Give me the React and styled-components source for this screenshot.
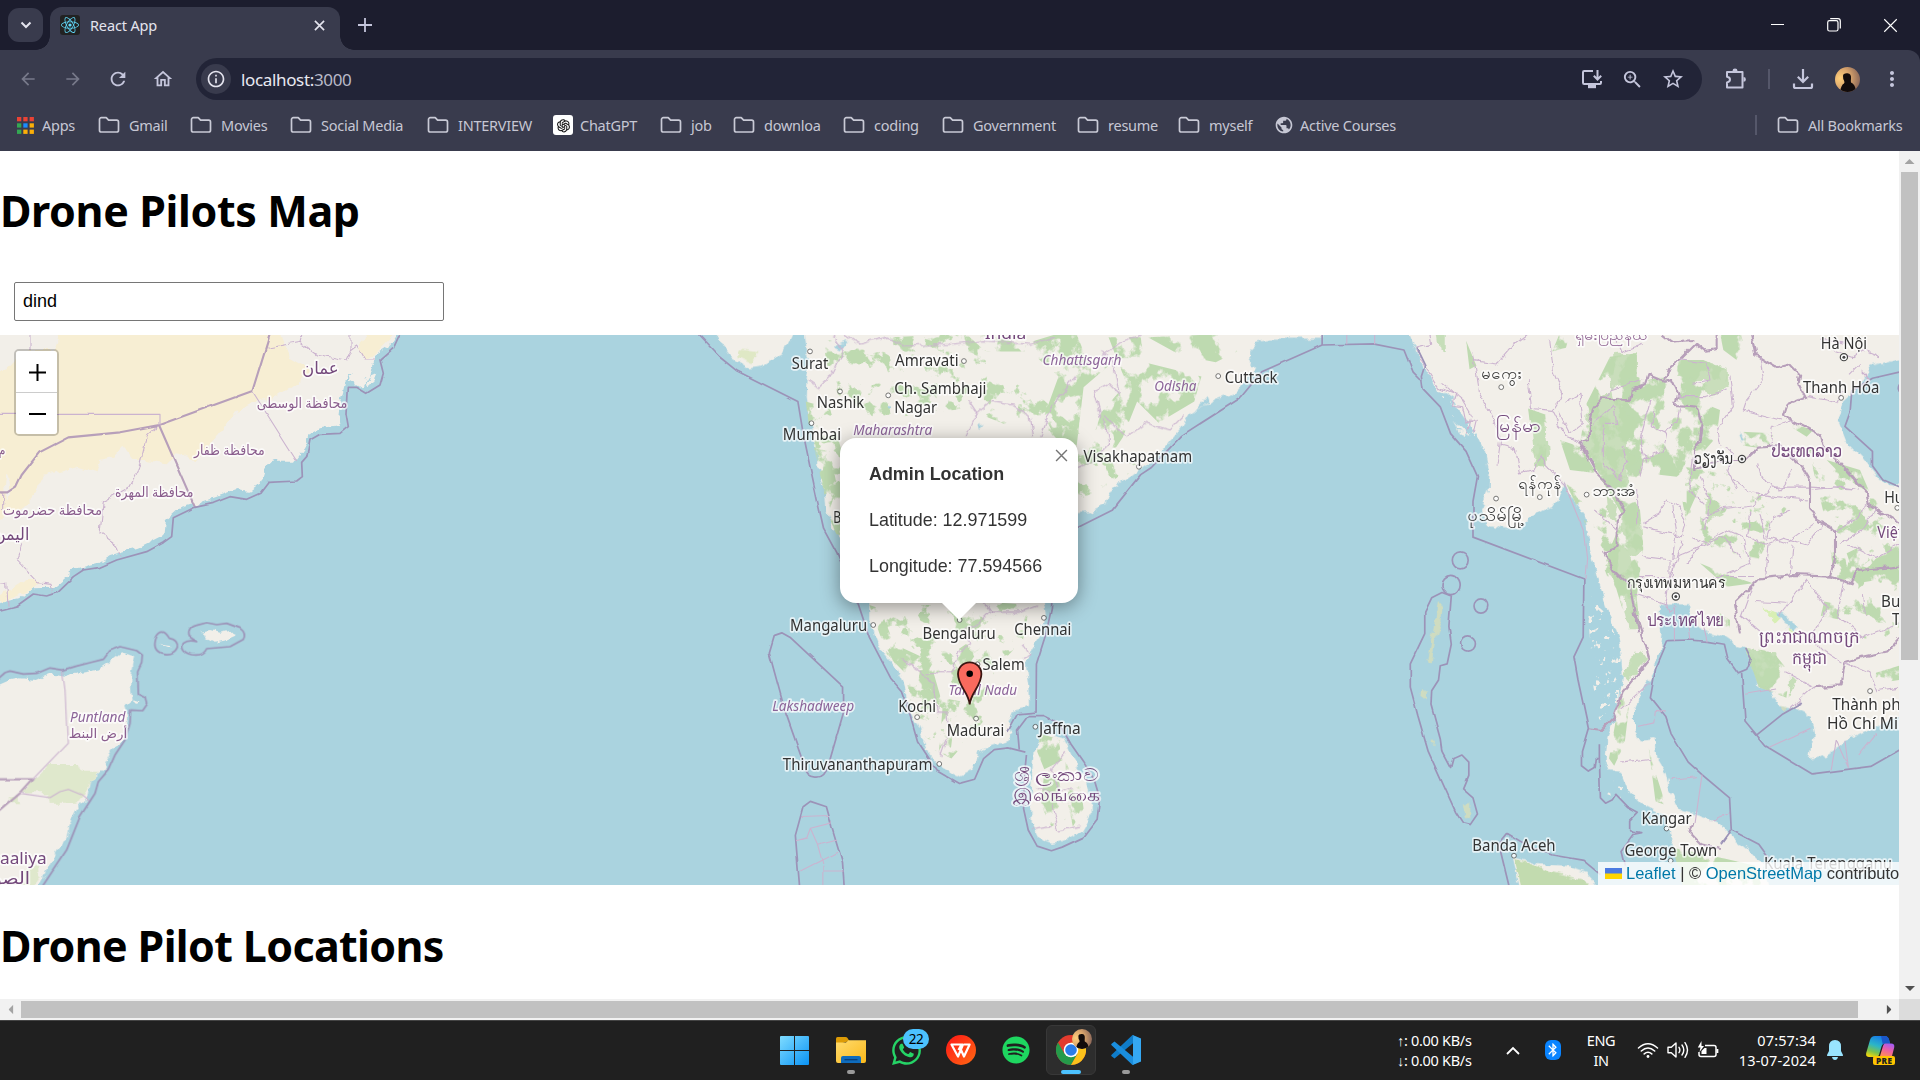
import React from "react";
import styled, { createGlobalStyle, css } from "styled-components";
import {
  MdArrowBack, MdArrowForward, MdRefresh, MdOutlineHome, MdOutlineInfo,
  MdZoomIn, MdStarBorder, MdPublic, MdBluetooth, MdMoreVert,
} from "react-icons/md";
import { FaWhatsapp, FaSpotify, FaReact } from "react-icons/fa6";
import { AiOutlineOpenAI } from "react-icons/ai";

const UI = `"Noto Sans", "Open Sans", sans-serif`;
const ARIAL = `"Liberation Sans", Arial, sans-serif`;

const Global = createGlobalStyle`
  * { box-sizing: border-box; }
  body { margin: 0; overflow: hidden; background: #fff; }
  svg { display: block; flex: none; }
`;

const Screen = styled.div`
  width: 1920px;
  height: 1080px;
  display: flex;
  flex-direction: column;
  overflow: hidden;
  font-family: ${UI};
`;

/* ---------- browser chrome ---------- */

const TabStrip = styled.div`
  height: 50px;
  flex: none;
  display: flex;
  align-items: flex-start;
  padding: 7px 0 0 8px;
  background: #1c1d2e;
`;

const TabSearch = styled.button`
  width: 35px;
  height: 34px;
  margin: 1px 7px 0 0;
  padding: 0;
  border: 0;
  border-radius: 11px;
  display: grid;
  place-items: center;
  background: #393b4d;
`;

const Tab = styled.div`
  position: relative;
  width: 290px;
  height: 43px;
  padding: 0 15px 7px 10px;
  display: flex;
  align-items: center;
  background: #393b4d;
  border-radius: 12px 12px 0 0;
  &::before, &::after {
    content: "";
    position: absolute;
    bottom: 0;
    width: 14px;
    height: 14px;
  }
  &::before { left: -14px; background: radial-gradient(circle at 0 0, transparent 13.5px, #393b4d 14px); }
  &::after { right: -14px; background: radial-gradient(circle at 100% 0, transparent 13.5px, #393b4d 14px); }
`;

const Favicon = styled.span`
  width: 20px;
  height: 20px;
  border-radius: 3px;
  display: grid;
  place-items: center;
  background: #222;
  color: #61dafb;
`;

const TabTitle = styled.span`
  flex: 1;
  margin-left: 10px;
  color: #e4e4ee;
  font-size: 14.5px;
  letter-spacing: -0.15px;
`;

const NewTab = styled.span`
  width: 50px;
  height: 36px;
  display: grid;
  place-items: center;
`;

const WindowButtons = styled.div`
  margin-left: auto;
  height: 36px;
  display: flex;
  align-items: center;
`;

const WindowButton = styled.span`
  width: ${(p) => p.$w || 57}px;
  display: grid;
  place-items: center;
`;

const Toolbar = styled.div`
  height: 54px;
  flex: none;
  display: flex;
  align-items: center;
  padding: 4px 0 0 5px;
  background: #393b4d;
  border-top-right-radius: 12px;
`;

const ToolbarBack = styled.div`
  flex: none;
  background: #1c1d2e;
`;

const ToolButton = styled.span`
  width: ${(p) => p.$w || 45}px;
  height: 42px;
  flex: none;
  display: grid;
  place-items: center;
  color: ${(p) => (p.$dim ? "#77798a" : "#c5c6dc")};
`;

const Omnibox = styled.div`
  width: 1506px;
  height: 42px;
  flex: none;
  margin-left: 11px;
  padding: 0 9px 0 5px;
  display: flex;
  align-items: center;
  border-radius: 21px;
  background: #222437;
  color: #d0d0dc;
`;

const SiteInfo = styled.span`
  width: 30px;
  height: 30px;
  border-radius: 50%;
  display: grid;
  place-items: center;
  background: #393b4d;
  color: #e4e4ee;
`;

const Url = styled.span`
  flex: 1;
  margin-left: 10px;
  font-size: 17px;
  letter-spacing: -0.35px;
  color: #b9bac8;
  b { font-weight: 400; color: #e9e9f2; }
`;

const Divider = styled.span`
  width: ${(p) => p.$w}px;
  height: 20px;
  flex: none;
  margin: ${(p) => p.$m};
  background: #55576a;
`;

const Avatar = styled.span`
  width: 25px;
  height: 25px;
  flex: none;
  margin: 0 10px 0 8px;
  border-radius: 50%;
  overflow: hidden;
`;

const Bookmarks = styled.div`
  height: 47px;
  flex: none;
  display: flex;
  align-items: center;
  padding: 0 0 5px 17px;
  background: #393b4d;
`;

const Bookmark = styled.span`
  width: ${(p) => p.$w}px;
  display: flex;
  align-items: center;
  gap: ${(p) => p.$gap ?? 9}px;
  color: #c6c7d4;
  font-size: 14.5px;
  letter-spacing: -0.25px;
  white-space: nowrap;
`;

const GptBadge = styled.span`
  width: 20px;
  height: 20px;
  flex: none;
  border-radius: 3px;
  display: grid;
  place-items: center;
  background: #fff;
  color: #111;
`;

const Spacer = styled.span`flex: 1;`;

/* ---------- page ---------- */

const Viewport = styled.div`
  height: 869px;
  flex: none;
  display: grid;
  grid-template-columns: 1899px 21px;
  grid-template-rows: 848px 21px;
`;

const Page = styled.main`
  overflow: hidden;
  background: #fff;
`;

const Heading = styled.h1`
  margin: 0;
  height: ${(p) => p.$h}px;
  padding-top: ${(p) => p.$top}px;
  color: #000;
  font-family: ${UI};
  font-size: 43px;
  line-height: 60px;
  font-weight: 700;
  letter-spacing: ${(p) => p.$ls}px;
  white-space: nowrap;
`;

const SearchInput = styled.input`
  display: block;
  width: 430px;
  height: 39px;
  margin: 0 0 14px 14px;
  padding: 0 8px;
  border: 1px solid #767676;
  border-radius: 2px;
  outline: 0;
  font: 18px ${ARIAL};
  color: #000;
`;

const MapBox = styled.section`
  position: relative;
  height: 550px;
  overflow: hidden;
  background: #aad3df;
`;

const ZoomControl = styled.div`
  position: absolute;
  top: 14px;
  left: 14px;
  width: 45px;
  border: 2px solid rgba(0, 0, 0, 0.2);
  background-clip: padding-box;
  border-radius: 5px;
  overflow: hidden;
`;

const ZoomButton = styled.div`
  height: ${(p) => p.$h}px;
  padding: 1px 0 0 1px;
  display: grid;
  place-items: center;
  background: #fff;
  border-bottom: ${(p) => (p.$line ? "1px solid #ccc" : "0")};
`;

const Popup = styled.div`
  position: absolute;
  left: 840px;
  top: 103px;
  width: 238px;
  height: 165px;
  padding: 25px 29px;
  border-radius: 16px;
  background: #fff;
  box-shadow: 0 4px 19px rgba(0, 0, 0, 0.4);
  font: 17.9px/22px ${ARIAL};
  color: #333;
  p { margin: 0 0 24px; }
`;

const PopupTip = styled.div`
  position: absolute;
  left: 942px;
  top: 268px;
  width: 34px;
  height: 17px;
  background: #fff;
  clip-path: polygon(0 0, 100% 0, 50% 100%);
`;

const PopupClose = styled.span`
  position: absolute;
  right: 10px;
  top: 11px;
`;

const Attribution = styled.div`
  position: absolute;
  left: 1598px;
  bottom: 0;
  height: 23px;
  padding-left: 7px;
  display: flex;
  align-items: center;
  background: rgba(255, 255, 255, 0.8);
  font: 16.5px ${ARIAL};
  color: #333;
  white-space: pre;
  width: 340px;
  a { color: #0078a8; }
  svg { margin-right: 4px; }
`;

const track = css`
  display: flex;
  align-items: center;
  background: #f1f1f1;
`;
const VScroll = styled.div`
  ${track}
  flex-direction: column;
`;
const HScroll = styled.div`
  ${track}
`;
const ScrollArrow = styled.span`
  width: 21px;
  height: 21px;
  flex: none;
  display: grid;
  place-items: center;
  &::after {
    content: "";
    width: 10px;
    height: 5px;
    background: ${(p) => (p.$off ? "#a3a3a3" : "#505050")};
    clip-path: polygon(50% 0, 100% 100%, 0 100%);
    transform: rotate(${(p) => p.$turn}deg);
  }
`;
const Thumb = styled.span`
  width: ${(p) => p.$w}px;
  height: ${(p) => p.$h}px;
  background: #c1c1c1;
`;
const Corner = styled.div`background: #dcdcdc;`;

/* ---------- taskbar ---------- */

const Taskbar = styled.footer`
  height: 60px;
  flex: none;
  display: flex;
  align-items: stretch;
  padding-bottom: 1px;
  background: #202020;
  border-top: 1px solid #444;
  color: #fff;
`;

const TaskApps = styled.div`
  display: flex;
  align-items: center;
  margin-left: 769px;
  width: 628px;
`;

const TaskApp = styled.div`
  position: relative;
  width: 50px;
  height: 50px;
  margin-right: ${(p) => p.$gap ?? 5}px;
  display: grid;
  place-items: center;
  border-radius: 6px;
  border: 1px solid ${(p) => (p.$active ? "#383838" : "transparent")};
  background: ${(p) => (p.$active ? "#2d2d2d" : "transparent")};
  &::after {
    content: "";
    position: absolute;
    bottom: 0;
    left: calc(50% - ${(p) => (p.$active ? 10 : 4)}px);
    width: ${(p) => (p.$active ? 20 : p.$running ? 8 : 0)}px;
    height: 4px;
    border-radius: 2px;
    background: ${(p) => (p.$active ? "#4cc2ff" : "#9a9a9a")};
  }
`;

const CountBadge = styled.span`
  position: absolute;
  left: 21px;
  top: 3px;
  width: 26px;
  height: 20px;
  border-radius: 10px;
  background: #4cc2ff;
  color: #000;
  font-size: 13.5px;
  line-height: 20px;
  text-align: center;
  letter-spacing: -0.5px;
`;

const ProfileBadge = styled.span`
  position: absolute;
  right: 3px;
  top: 3px;
  width: 20px;
  height: 20px;
  border-radius: 50%;
  overflow: hidden;
`;

const TrayText = styled.div`
  width: ${(p) => p.$w}px;
  align-self: center;
  display: flex;
  flex-direction: column;
  font-size: 14.5px;
  line-height: 20px;
  letter-spacing: ${(p) => p.$ls ?? -0.35}px;
  text-align: ${(p) => p.$align || "left"};
  white-space: nowrap;
`;

const TrayIcon = styled.span`
  width: ${(p) => p.$w}px;
  display: grid;
  place-items: center;
`;

const BluetoothTile = styled.span`
  width: 16px;
  height: 20px;
  border-radius: 6px;
  display: grid;
  place-items: center;
  background: #0a84ff;
`;

/* ---------- small drawings ---------- */

const Folder = () => (
  <svg width="22" height="18" viewBox="0 0 22 18" fill="none" stroke="#c9cad6" strokeWidth="1.7" strokeLinejoin="round">
    <path d="M1.5 3.5a1.8 1.8 0 0 1 1.8-1.8h4.9l2.4 2.5h8.1a1.8 1.8 0 0 1 1.8 1.8v8.2a1.8 1.8 0 0 1-1.8 1.8H3.300a1.800 1.800 0 0 1-1.800-1.800z" />
  </svg>
);

const AppsGrid = () => (
  <svg width="17" height="17" viewBox="0 0 17 17">
    {["#ea4335", "#ea4335", "#ea4335", "#34a853", "#1a8cff", "#fbaf08", "#34a853", "#fbaf08", "#fbaf08"].map((c, i) => (
      <rect key={i} x={(i % 3) * 6.3} y={Math.floor(i / 3) * 6.3} width="4.3" height="4.3" fill={c} />
    ))}
  </svg>
);

const Portrait = ({ size }) => (
  <svg width={size} height={size} viewBox="0 0 25 25">
    <defs>
      <radialGradient id="dusk" cx="0.2" cy="0.45" r="0.9">
        <stop offset="0" stopColor="#ffcf7a" />
        <stop offset="0.45" stopColor="#d9a46c" />
        <stop offset="1" stopColor="#7a5a55" />
      </radialGradient>
    </defs>
    <rect width="25" height="25" fill="url(#dusk)" />
    <path d="M8 9q0-3 4.500-2.800Q16.500 6.500 16 11.500q-.3 3 0 4 4.500 1.500 5 9.500H5q1-7 4-8.500 1-1 0-3-1-1-1-4.500z" fill="#120b0b" />
  </svg>
);

const Install = () => (
  <svg width="22" height="20" viewBox="0 0 22 20" fill="none" stroke="currentColor" strokeWidth="2">
    <path d="M12 2H3.200Q2 2 2 3.200V13.800Q2 15 3.200 15H18.800Q20 15 20 13.800V12M16.500 1v9M12.800 6.800l3.700 3.700 3.700-3.700" />
    <path d="M7 17.500h8" strokeWidth="3.400" />
  </svg>
);

const Puzzle = () => (
  <svg width="22" height="22" viewBox="0 0 22 22" fill="none" stroke="currentColor" strokeWidth="2" strokeLinejoin="round">
    <path d="M2 4h15.500v15.500H2v-5q3-.6 3-2.900T2 8.800z" />
    <path d="M7.500 3q0-2.400 2.500-2.400T12.500 3zM18.500 9q2.400 0 2.400 2.400t-2.400 2.400z" fill="currentColor" stroke="none" />
  </svg>
);

const Download = () => (
  <svg width="22" height="22" viewBox="0 0 22 22" fill="none" stroke="currentColor" strokeWidth="2.200">
    <path d="M11 1v12.500M5.800 8.800l5.200 5.200 5.200-5.200M2 15.500v3q0 1.500 1.500 1.500h15q1.500 0 1.500-1.500v-3" />
  </svg>
);

const Cross = ({ size, color, w = 1.5 }) => (
  <svg width={size} height={size} viewBox="0 0 12 12" stroke={color} strokeWidth={w}>
    <path d="M1 1l10 10M11 1L1 11" />
  </svg>
);

const WindowsLogo = () => (
  <svg width="29" height="29" viewBox="0 0 29 29">
    <defs>
      <linearGradient id="pane" x1="0" y1="0" x2="29" y2="29" gradientUnits="userSpaceOnUse">
        <stop offset="0" stopColor="#7fdcff" />
        <stop offset="1" stopColor="#0a93f5" />
      </linearGradient>
    </defs>
    <path d="M0 1q0-1 1-1h13v14H0zM15 0h13q1 0 1 1v13H15zM0 15h14v14H1q-1 0-1-1zM15 15h14v13q0 1-1 1H15z" fill="url(#pane)" />
  </svg>
);

const Explorer = () => (
  <svg width="30" height="26" viewBox="0 0 30 26">
    <defs>
      <linearGradient id="manila" x1="0" y1="0" x2="1" y2="1">
        <stop offset="0" stopColor="#ffdb6e" />
        <stop offset="1" stopColor="#fbb91a" />
      </linearGradient>
    </defs>
    <path d="M0 1.500Q0 0 1.500 0h8q1.300 0 2 1l1.800 3L0 8z" fill="#dd9b06" />
    <path d="M0 5.500h10l2.500-2.300H30V24q0 2-2 2H2q-2 0-2-2z" fill="url(#manila)" />
    <path d="M5 26v-5q0-2 2-2h16q2 0 2 2v5z" fill="#0f6cbd" />
    <path d="M8.500 22.700h13" stroke="#0a3f78" strokeWidth="1.300" />
  </svg>
);

const Wps = () => (
  <svg width="30" height="30" viewBox="0 0 30 30">
    <defs>
      <linearGradient id="wps" x1="0" y1="0" x2="1" y2="1">
        <stop offset="0" stopColor="#ff1616" />
        <stop offset="1" stopColor="#ff6a13" />
      </linearGradient>
    </defs>
    <circle cx="15" cy="15" r="15" fill="url(#wps)" />
    <path d="M5.500 9.500H17L12 21.500zM12.500 15l3-5.500M14.800 14.500l3.200 7 5.600-12H18" fill="none" stroke="#fff" strokeWidth="2.200" strokeLinejoin="round" />
  </svg>
);

const Chrome = () => (
  <svg width="30" height="30" viewBox="0 0 30 30">
    <circle cx="15" cy="15" r="15" fill="#e33b2e" />
    <path d="M2 7.500A15 15 0 0 0 15 30l6.500-11.300L15 15 8.500 18.700z" fill="#259b4a" />
    <path d="M15 30A15 15 0 0 0 28 7.500H15l6.500 11.200z" fill="#fcc21b" />
    <circle cx="15" cy="15" r="7.300" fill="#fff" />
    <circle cx="15" cy="15" r="5.800" fill="#2b7de9" />
  </svg>
);

const VsCode = () => (
  <svg width="30" height="30" viewBox="0 0 30 30">
    <path d="M21.500 0L30 4v5.500L22 8.200 3.500 23.500.6 21.300q-.8-.8 0-1.600z" fill="#0f7cc9" />
    <path d="M21.500 30L30 26v-5.500l-8 1.300L3.500 6.500.6 8.700q-.8.800 0 1.600z" fill="#1a8ede" />
    <path d="M21.500 0q1.500 1 .5 3v24q1 2-.5 3L30 26.500V3.500z" fill="#35a8f3" />
  </svg>
);

const Wifi = () => (
  <svg width="22" height="17" viewBox="0 0 22 17" fill="none" stroke="#fff" strokeWidth="1.500" strokeLinecap="round">
    <path d="M1.500 6Q11-2.500 20.500 6M4.300 9q6.700-6 13.400 0M7.200 11.900q3.800-3.400 7.600 0" />
    <circle cx="11" cy="14.500" r="1.400" fill="#fff" stroke="none" />
  </svg>
);

const Speaker = () => (
  <svg width="22" height="18" viewBox="0 0 22 18" fill="none" stroke="#fff" strokeWidth="1.400" strokeLinejoin="round" strokeLinecap="round">
    <path d="M1 6.300h3.300L9 2v14l-4.700-4.300H1zM12 6.300q1.800 2.700 0 5.400M15 4q3.600 5 0 10M18 1.700q5 7.300 0 14.600" />
  </svg>
);

const Battery = () => (
  <svg width="22" height="18" viewBox="0 0 22 18" fill="none" stroke="#fff" strokeWidth="1.500">
    <path d="M8 4.500h9q2 0 2 2v7q0 2-2 2H4q-2 0-2-2V11M20.600 8v4" />
    <path d="M4.500 13V10l3-3h2v6z" fill="#fff" stroke="none" />
    <path d="M4.500 0L.8 6.500h2.700L2.500 11 7 5H4.500z" fill="#fff" stroke="none" />
  </svg>
);

const Bell = () => (
  <svg width="18" height="20" viewBox="0 0 18 20" fill="#99e4ff">
    <path d="M9 0q6 0 6 6.500v4.500l2 4q.3 1-.7 1H1.700q-1 0-.7-1l2-4V6.500Q3 0 9 0zM6 17h6q-.6 3-3 3t-3-3z" />
  </svg>
);

const Copilot = () => (
  <svg width="30" height="29" viewBox="0 0 30 29">
    <defs>
      <linearGradient id="cpl" x1="0.6" y1="0" x2="0.2" y2="1">
        <stop offset="0" stopColor="#1679e8" />
        <stop offset="0.45" stopColor="#2bb5c8" />
        <stop offset="0.75" stopColor="#7dc24b" />
        <stop offset="1" stopColor="#f5d90a" />
      </linearGradient>
      <linearGradient id="cpr" x1="0.7" y1="0" x2="0.3" y2="1">
        <stop offset="0" stopColor="#a35cf5" />
        <stop offset="0.5" stopColor="#ec5fa6" />
        <stop offset="1" stopColor="#ff8a5c" />
      </linearGradient>
    </defs>
    <path d="M9 0h10q3 0 4 3.500l1 4h-5q-2.500 0-3.500 3L13 19q-1 2-3 2H3q-3.500 0-2.800-4L4 4q1.200-4 5-4z" fill="url(#cpl)" />
    <path d="M15 0h4q3 0 4 3.500l1 4h-5q-1.500 0-2.200 1z" fill="#1b57c9" />
    <path d="M19 7.500h6q4 0 3.200 4L26 20H14l3-10q.6-2.500 2-2.500z" fill="url(#cpr)" />
    <rect x="7" y="20" width="22" height="9" rx="2" fill="#ffc400" />
    <text x="18" y="27.500" textAnchor="middle" fontFamily="Open Sans, sans-serif" fontWeight="800" fontSize="8.200" fill="#222" textLength="16">PRE</text>
  </svg>
);

/* ---------- map ---------- */

// Each sheet has its own local units; x, y is its origin on the screen.
const SHEETS = {
  arabia: { x: 0, y: 150, sx: 3, sy: 3 },
  somalia: { x: 0, y: 600, sx: 3, sy: 3 },
  india: { x: 680, y: 330, sx: 2.8, sy: 2.8 },
  indochina: { x: 1380, y: 330, sx: 2.9037, sy: 2.8 },
  mekong: { x: 1560, y: 330, sx: 3, sy: 3 },
};

const Sheet = ({ on, children }) => {
  const s = SHEETS[on];
  return (
    <g transform={`translate(${s.x} ${s.y}) scale(${1 / s.sx} ${1 / s.sy})`}>
      {children}
    </g>
  );
};

const Land = styled.path`fill: #f2efe9;`;
const Desert = styled.path`fill: #f7eed3;`;
const Wood = styled.path`fill: ${(p) => p.$c || "#bedab0"};`;
const Lake = styled.path`fill: #aad3df;`;
const Line = styled.path`
  fill: none;
  stroke: ${(p) => (p.$kind === "state" ? "#cbb3cf" : p.$kind === "nation" ? "#b79fba" : "#9c93b8")};
  stroke-width: ${(p) => (p.$kind === "state" ? 1.1 : p.$kind === "nation" ? 2.1 : 1.7)}px;
  stroke-linejoin: round;
  vector-effect: non-scaling-stroke;
`;

const MapText = styled.text`
  font-family: "Noto Sans", "DejaVu Sans", sans-serif;
  font-size: ${(p) => p.$size}px;
  font-style: ${(p) => (p.$kind === "state" ? "italic" : "normal")};
  fill: ${(p) => (p.$kind === "city" ? "#333" : p.$kind === "state" ? "#8c6499" : p.$kind === "arab" ? "#8a5d8d" : "#74497c")};
  stroke: rgba(255, 255, 255, 0.7);
  stroke-width: 3.5px;
  paint-order: stroke;
  stroke-linejoin: round;
`;

// sheet, text, left, baseline, width (sheet units), size, kind
const LABELS = [
  ["arabia", "عمان", 906, 672, 110, 17, "country"],
  ["arabia", "محافظة الوسطى", 770, 773, 272, 14, "arab"],
  ["arabia", "محافظة ظفار", 582, 916, 212, 14, "arab"],
  ["arabia", "محافظة المهرة", 345, 1041, 235, 14, "arab"],
  ["arabia", "محافظة حضرموت", 8, 1095, 298, 14, "arab"],
  ["arabia", "اليمن", -18, 1170, 106, 17, "country"],
  ["arabia", "م", -4, 916, 20, 14, "arab"],
  ["somalia", "Puntland", 210, 365, 166, 14, "state"],
  ["somalia", "أرض البنط", 206, 413, 176, 13, "arab"],
  ["somalia", "aaliya", 0, 792, 140, 16.5, "country"],
  ["somalia", "الصو", -22, 852, 112, 17, "country"],
  ["india", "India", 853, 24, 117, 17, "country"],
  ["india", "Surat", 313, 108, 102, 16, "city"],
  ["india", "Amravati", 602, 102, 178, 16, "city"],
  ["india", "Chhattisgarh", 1015, 97, 221, 14, "state"],
  ["india", "Odisha", 1328, 170, 118, 14, "state"],
  ["india", "Nashik", 383, 218, 133, 16, "city"],
  ["india", "Ch. Sambhaji", 600, 180, 258, 16, "city"],
  ["india", "Nagar", 600, 233, 120, 16, "city"],
  ["india", "Maharashtra", 485, 294, 221, 14, "state"],
  ["india", "Mumbai", 288, 307, 163, 16, "city"],
  ["india", "Visakhapatnam", 1130, 370, 304, 16, "city"],
  ["india", "Cuttack", 1525, 147, 148, 16, "city"],
  ["india", "B", 429, 540, 22, 16, "city"],
  ["india", "Mangaluru", 308, 843, 216, 16, "city"],
  ["india", "Bengaluru", 679, 865, 205, 16, "city"],
  ["india", "Chennai", 936, 853, 160, 16, "city"],
  ["india", "Salem", 847, 951, 118, 16, "city"],
  ["india", "Tamil Nadu", 752, 1023, 192, 14, "state"],
  ["india", "Lakshadweep", 258, 1067, 230, 14, "state"],
  ["india", "Kochi", 611, 1070, 106, 16, "city"],
  ["india", "Madurai", 747, 1136, 161, 16, "city"],
  ["india", "Jaffna", 1005, 1130, 117, 16, "city"],
  ["india", "Thiruvananthapuram", 288, 1232, 419, 16, "city"],
  ["india", "ශ්‍රී ලංකාව", 936, 1262, 236, 17, "country"],
  ["india", "இலங்கை", 932, 1320, 244, 17, "country"],
  ["indochina", "ရှမ်းပြည်နယ်", 565, 28, 210, 14, "arab"],
  ["indochina", "မကွေး", 293, 136, 118, 15, "city"],
  ["indochina", "မြန်မာ", 337, 285, 130, 18, "country"],
  ["indochina", "ရန်ကုန်", 402, 446, 125, 15, "city"],
  ["indochina", "ဘားအံ", 616, 465, 128, 15, "city"],
  ["indochina", "ပုသိမ်မြို့", 252, 535, 168, 15, "city"],
  ["indochina", "ວຽງຈັນ", 911, 376, 114, 15, "city"],
  ["indochina", "ປະເທດລາວ", 1137, 355, 205, 17, "country"],
  ["indochina", "Hà Nội", 1280, 54, 134, 16, "city"],
  ["indochina", "Thanh Hóa", 1228, 176, 222, 16, "city"],
  ["indochina", "Huế", 1464, 484, 80, 16, "city"],
  ["indochina", "Việt Nam", 1444, 581, 180, 17, "country"],
  ["indochina", "Buôn", 1455, 775, 110, 16, "city"],
  ["indochina", "Thuột", 1487, 826, 120, 16, "city"],
  ["indochina", "กรุงเทพมหานคร", 716, 722, 286, 15, "city"],
  ["indochina", "ประเทศไทย", 774, 828, 226, 17, "country"],
  ["indochina", "ព្រះរាជាណាចក្រ", 1100, 875, 294, 17, "country"],
  ["indochina", "កម្ពុជា", 1196, 934, 103, 17, "country"],
  ["indochina", "Thành phố", 1313, 1064, 226, 16, "city"],
  ["indochina", "Hồ Chí Minh", 1298, 1116, 262, 16, "city"],
  ["indochina", "Kangar", 759, 1383, 146, 16, "city"],
  ["indochina", "Banda Aceh", 268, 1460, 242, 16, "city"],
  ["indochina", "George Town", 710, 1473, 269, 16, "city"],
  ["indochina", "Kuala Terengganu", 1115, 1510, 372, 16, "city"],
];

const TOWNS = [
  ["india", 364, 60], ["india", 795, 87], ["india", 448, 172], ["india", 583, 183], ["india", 368, 261],
  ["india", 1507, 129], ["india", 1285, 383], ["india", 541, 826], ["india", 783, 812], ["india", 1019, 806],
  ["india", 833, 936], ["india", 664, 1084], ["india", 829, 1088], ["india", 995, 1111], ["india", 726, 1215],
  ["indochina", 352, 160], ["indochina", 337, 472], ["indochina", 464, 468], ["indochina", 600, 461],
  ["indochina", 1339, 190], ["indochina", 1502, 498], ["indochina", 1423, 1011], ["indochina", 832, 1396],
  ["indochina", 389, 1472], ["indochina", 844, 1486],
];
const CAPITALS = [["indochina", 1347, 76], ["indochina", 1051, 361], ["indochina", 859, 746]];

const place = (on, x, y) => {
  const s = SHEETS[on];
  return [s.x + x / s.sx, s.y + y / s.sy];
};

const MAP_AREA = { filterUnits: "userSpaceOnUse", x: 0, y: 330, width: 1899, height: 560, colorInterpolationFilters: "sRGB" };

// Rough edges for coasts and borders.
const Jitter = ({ id, freq, scale }) => (
  <filter id={id} {...MAP_AREA}>
    <feTurbulence type="fractalNoise" baseFrequency={freq} numOctaves="3" seed="4" result="n" />
    <feDisplacementMap in="SourceGraphic" in2="n" scale={scale} xChannelSelector="R" yChannelSelector="G" />
  </filter>
);

// Breaks a flat woodland shape into patches.
const Patches = ({ id, freq, seed, gain, cut }) => (
  <filter id={id} {...MAP_AREA}>
    <feTurbulence type="fractalNoise" baseFrequency={freq} numOctaves="5" seed={seed} result="n" />
    <feColorMatrix in="n" type="matrix" values={`0 0 0 0 0  0 0 0 0 0  0 0 0 0 0  ${gain} 0 0 0 ${-cut}`} result="m" />
    <feComposite in="SourceGraphic" in2="m" operator="in" />
  </filter>
);

const WorldMap = () => (
  <svg width="1899" height="550" viewBox="0 335 1899 550">
    <defs>
      <Jitter id="coast" freq="0.09" scale="9" />
      <Jitter id="border" freq="0.09" scale="7" />
      <Jitter id="sealine" freq="0.04" scale="3" />
      <Patches id="grove" freq="0.05 0.04" seed="11" gain="12" cut="5.4" />
      <Patches id="sparse" freq="0.06" seed="23" gain="12" cut="6.9" />
      <Patches id="islets" freq="0.14" seed="5" gain="14" cut="8.6" />
    </defs>
    <rect y="335" width="1899" height="550" fill="#aad3df" />

    <g filter="url(#coast)">
      <Sheet on="arabia">
        <Land d="M-20 535H1200L1165 590 1125 615 1125 640 1085 710 1050 690 1055 665 1035 700 1020 760 1015 800 1020 825 960 835 925 855 910 900 885 935 830 935 795 945 785 980 775 1005 750 1025 710 1020 640 1045 590 1062 530 1080 495 1110 490 1155 420 1190 330 1215 290 1240 230 1255 195 1285 165 1310 100 1312 60 1345-20 1362zM1095 705L1110 670 1128 662 1122 690 1100 712z" />
        <Desert d="M190 535L165 600 90 600 50 620 20 655-20 670V1120L60 1080 100 1040 130 980 200 960 230 950 290 970 300 930 340 920 370 890 400 930 440 930 500 940 530 910 590 930 640 870 700 790 760 760 830 740 900 690 940 660 870 620 850 570 840 535zM1075 600L1105 535H1200L1125 612 1095 632zM80 1290L120 1290 90 1320 0 1360V1340z" />
        <Land d="M15 975L25 980 28 1030 18 1050 12 1010z" />
      </Sheet>
      <Sheet on="somalia">
        <Land d="M-20 262L30 240 60 235 110 240 150 222 190 230 240 215 300 205 335 180 360 160 405 172 395 220 393 270 398 300 375 320 385 350 375 410 330 460 310 510 270 545 262 590 230 630 205 680 200 710 170 760 105 875H-20zM605 95L630 90 660 98 685 92 712 106 680 120 640 128 618 118zM480 134L512 138 500 144zM400 300L425 308 408 312z" />
        <Wood $c="#dfe8cc" d="M150 492H235L245 515H300L270 545 255 580 235 608H150L145 580H60L100 540zM30 588H54V610H30zM80 810L120 795 122 830 100 860H60z" />
      </Sheet>
      <Sheet on="india">
        <Land d="M90-10L120 40 150 80 190 105 230 100 290 65 325-10zM345-10L352 60 365 90 355 130 352 190 360 240 370 280 380 330 390 390 405 450 412 520 440 575 470 650 500 710 530 770 530 810 560 890 600 940 625 990 645 1060 670 1120 700 1190 730 1225 775 1250 810 1235 830 1210 835 1180 870 1165 915 1150 930 1125 920 1095 935 1060 980 1050 978 990 970 930 985 890 1010 850 1025 800 1020 770 1010 700 1030 620 1060 560 1085 515 1150 510 1190 490 1200 455 1280 395 1340 350 1400 280 1428 233 1465 210 1554 177 1587 140 1610 107 1591 79 1591 56 1615 33 1652 24 1801 24V-10z" />
        <Land d="M1035 1130L1075 1140 1100 1200 1130 1250 1150 1310 1150 1360 1125 1405 1080 1430 1040 1440 1005 1425 985 1380 982 1300 990 1180 1005 1150z" />
        <Wood $c="#dfe8c5" d="M160 50L220 60 200 90 165 75z" />
        <Lake d="M1440 225L1475 185 1480 200 1455 215zM565 210L590 215 580 230zM835 260L850 270 840 280zM430 50L470 30 450 60z" />
      </Sheet>
      <Sheet on="indochina">
        <Land d="M75-10L100 50 130 110 170 165 210 190 240 240 285 300 305 340 318 400 315 450 290 510 310 545 370 560 410 560 430 530 475 505 500 495 520 470 535 430 560 470 595 520 605 580 620 640 640 720 665 800 690 860 700 920 705 970 695 1030 685 1080 660 1140 655 1200 665 1235 700 1240 720 1290 760 1330 830 1365 840 1410 860 1450 880 1500 900 1580H1130L1110 1500 1060 1450 1010 1410 980 1375 930 1360 870 1340 840 1290 830 1240 805 1200 800 1145 760 1150 740 1120 740 1060 760 1010 790 960 815 900 820 850 815 800 850 770 900 785 920 830 960 850 1000 860 1030 880 1060 890 1080 930 1100 1000 1130 1010 1160 1050 1210 1060 1250 1080 1260 1130 1245 1200 1290 1190 1370 1140 1440 1110 1540 1070V440L1450 420 1400 360 1350 310 1330 260 1345 200 1400 150 1430 100 1540 70V-10z" />
        <Land d="M385 1475L450 1495 540 1500 600 1520 650 1580H410zM225 275L250 285 240 298zM210 260L240 262 260 300 230 270z" />
        <Wood $c="#c2dbaf" d="M390 1480L450 1500 500 1520 600 1545 610 1580H415z" />
        <Lake d="M815 770L900 768 905 800 860 810 815 800z" />
        <Wood $c="#cfdcc0" d="M168 765L182 770 178 810 160 870 150 930 140 925 150 860 160 810zM125 1005L140 1010 135 1035 122 1025zM240 1335L262 1330 262 1360 250 1365zM1165 1050L1185 1055 1178 1070zM150 1150h12v8h-12z" />
        <Lake d="M1145 790L1170 795 1215 830 1200 845 1170 820zM1040 290L1060 310 1050 315z" />
      </Sheet>
    </g>

    <g filter="url(#sparse)">
      <Sheet on="india">
        <Wood d="M352 200L420 220 450 330 450 600 500 710 530 770 700 770 850 760 980 770 960 870 880 950 880 1060 760 1200 700 1170 600 930 540 820 420 530 360 260z" />
        <Wood d="M400 30L800 10 900 100 1000 180 1180 340 1300 380 1110 480 1000 300 800 220 560 250 430 200z" />
      </Sheet>
      <Sheet on="indochina">
        <Wood d="M540 430L680 520 690 700 660 690 620 590zM860 380L1000 400 1180 500 1100 640 900 600zM1240 320L1400 430 1507 560V900L1340 840 1300 560z" />
      </Sheet>
    </g>
    <g filter="url(#islets)">
      <Sheet on="indochina">
        <Land d="M600 740L640 760 690 870 700 940 690 1060 640 1110 620 1000zM690 1240L720 1320 660 1300zM160 150L220 160 290 290 250 310 200 220z" />
      </Sheet>
    </g>
    <g filter="url(#grove)">
      <Sheet on="india">
        <Wood d="M530 770L560 780 600 880 720 935 800 880 840 890 800 950 710 960 730 1030 790 1040 770 1080 755 1200 725 1180 735 1060 640 970 580 910z" />
        <Wood d="M760 10H840L960 40 1060 10H1110L1130 60 1200 100 1130 160 1110 330 1050 300 1020 240 1060 130 980 60 860 60z" />
        <Wood d="M1200 20H1290L1300 90 1460 130 1440 200 1340 260 1280 200 1240 300 1200 360 1130 380 1180 230 1250 150z" />
        <Wood d="M1310 20L1550 10 1560 60 1500 90 1400 70zM375 330L420 340 440 440 420 500 400 430z" />
        <Wood d="M1010 1130L1070 1150 1080 1200 1020 1230 1000 1180zM1080 1180L1120 1270 1130 1340 1100 1390 1080 1300zM1020 1240L1060 1250 1080 1370 1040 1390 1010 1330z" />
      </Sheet>
      <Sheet on="mekong">
        <Wood d="M120 140L150 80 230 70 230 140 260 150 310 140 350 90 430 90 500 120 500 180 430 220 480 240 470 320 400 400 350 440 260 430 200 470 240 540 250 650 230 800 240 900 200 880 140 680 190 560 60 340 80 220z" />
        <Wood d="M0 330L60 350 110 430 30 420zM380 440L420 470 380 560zM480 10H560L530 90 490 60zM440 300L640 310 640 360 500 340zM800 390L900 420 930 490 850 440zM660 270L760 300 740 320zM860 670L900 650 930 690 880 730zM975 660L1016 640V760L960 740zM420 700L520 740 580 760 500 770zM480 850L510 870V900L470 890z" />
      </Sheet>
      <Sheet on="indochina">
        <Wood d="M430 220L490 240 480 380 450 380zM520 14H550L540 50 500 60zM250 30L280 100 260 110zM1060 890L1140 900 1190 960 1180 1030 1100 1000zM700 1010L730 1000 710 1160 680 1220 665 1200zM780 1170L800 1240 830 1330 800 1320zM850 1450L1000 1480 1090 1500 1110 1560H880zM1360 650L1430 670 1420 690 1350 690zM1440 640L1507 610V690L1380 710zM1290 760L1340 770 1330 810 1280 800zM1440 960L1507 940V980L1440 990z" />
      </Sheet>
    </g>
    <g filter="url(#coast)">
      <Sheet on="mekong">
        <g opacity="0.8">
          <Wood d="M145 95L170 68 228 70 228 130 175 165 120 205 88 215 82 320 64 345 120 430 160 440 210 470 200 420 235 390 190 350 235 290 190 230 230 205 160 210 150 160z" />
          <Wood d="M190 540H230L245 600 250 660 215 680 240 720 222 800 240 895H205L190 800 165 760 135 690 160 640 205 660 185 600zM140 490L170 530 165 570 145 560zM360 100L430 92 500 115 503 170 460 195 430 180 440 150 400 150 350 130zM435 505L475 520 485 555 440 575z" />
        </g>
      </Sheet>
      <Sheet on="indochina">
        <g opacity="0.85">
          <Wood d="M165 14H188V62L170 50zM435 225L455 230 480 260 488 350 475 385 450 380zM1065 900L1150 905 1165 960 1130 1000 1100 990zM740 900L782 915 720 985 705 970zM1190 970L1210 980 1190 1030z" />
        </g>
        <Wood $c="#d8efb4" d="M1110 780L1150 790 1160 810 1150 820zM1190 840L1230 850 1190 850z" />
      </Sheet>
    </g>

    <g filter="url(#border)">
      <Sheet on="arabia">
        <Line $kind="state" d="M477 825L440 860 430 900 415 960 390 1010 310 1055 300 1150 350 1185 362 1222M800 595L900 577 950 615 1035 633 1050 600 1070 585 1095 630H1125M1050 600V540M90 540V600M900 577L910 540M8 1027V1080M65 1180L50 1230 110 1295 150 1300 158 1330M0 1297L20 1300 24 1370" />
      </Sheet>
      <Sheet on="india">
        <Line $kind="state" d="M460 14L500 40 580 20 630 45 760 40 850 30 980 40 1050 20M360 140L390 160 420 130 440 90 460 60 430 14M1110 100L1160 90 1200 60 1240 30 1290 14M820 240L870 200 930 210 980 240 990 300M800 300L830 230 810 200M1180 250L1160 170 1200 150 1230 180 1210 80 1180 60M1190 240L1250 300 1300 260 1370 280 1410 240M1010 300L1030 240 1060 190 1110 130M1190 250L1200 320 1150 370 1080 400M850 760L870 790 840 820 790 840 820 880 780 900 760 960 690 960M870 790L950 790 1000 770M620 920L680 960 710 1000 720 1070 750 1070 755 1120 730 1190M960 880L980 910 960 920" />
        <Line $kind="state" d="M1000 1280L1050 1300 1100 1280M1040 1330L1060 1400 1120 1390M985 1400L1040 1390M1080 1180L1040 1230 1060 1290" />
      </Sheet>
      <Sheet on="indochina">
        <Line $kind="nation" d="M1075 0L1090 70 1150 105 1190 95 1220 125 1215 150 1235 190 1180 210 1170 240 1280 295 1290 330 1330 365 1410 450 1420 490 1520 550M745 800L783 920 705 1015 680 1085 645 1120 605 1115M910 1380L900 1410 930 1440 990 1450M1260 1000L1340 995 1350 930 1400 915 1470 900 1510 860" />
        <Line $kind="state" d="M105 50L130 100 170 160 220 180 210 210 240 215 250 260 280 250 270 290M180 150L240 200 265 240 250 290M105 50L150 40 145 14M270 60L290 180 330 250 350 310 340 380M430 140L440 220 500 225 530 180 500 110 490 30M350 320L390 330 405 400 450 390 470 350 480 380 540 440M500 225L540 300 590 320M270 85L340 95 380 50 430 14M935 530L1000 500 1080 490 1140 440 1250 440 1380 445M850 490L860 560 850 640 1000 580 1050 640M740 740L830 770 840 700 880 590M1080 510L1070 580 1120 600 1170 580 1240 600 1290 540M1130 600L1120 690M1200 600L1190 690M930 410L960 480 940 560M970 690L1090 690M1120 590L1100 510M830 760L840 790 860 780M700 1060L780 990M700 1210L790 1200M920 1250L840 1260M960 1375L1015 1350M1160 800L1240 700 1300 780 1250 860 1290 900M1080 720L1050 800 1100 840M1350 700L1330 800 1400 860 1507 820M1360 600L1440 640 1507 600M1180 960L1260 1000 1190 1060M1350 930L1420 960 1440 1010 1507 1000M1090 760L1180 765M1290 900L1340 930M1400 740L1410 800M1440 500L1400 560 1330 600M680 14L700 60 760 40" />
      </Sheet>
      <Sheet on="mekong">
        <Line $kind="nation" d="M60 335L90 330V280L100 235 125 205 210 210 215 180 255 165 265 135 315 155 335 150 355 195 345 225 410 230 425 280 420 330 405 360V420L450 400 520 390 560 390 600 350 660 345 720 400 750 450V530L770 570 825 600V680L810 740 700 735 600 745 525 820 540 910M60 335L110 430 160 480 195 545 170 570V650L130 665 160 720 210 770 235 910M810 740L875 760 890 720 1020 710M315 150L330 110 360 90 410 40 440 65 470 60V10M300 10L330 35 400 30" />
        <Line $kind="state" d="M140 210L150 180 250 150M350 200L430 200 500 180M360 90L440 100 450 150 400 160M510 140L520 230 470 300 480 350M600 80L610 150 560 210 550 240 660 270M100 280L160 225 170 280 130 280 130 400 180 450 200 390 185 350M280 240V290L320 310 310 360 250 390 240 440M310 305L350 280 360 230M270 210L240 330 260 400M490 350L520 370 500 420 530 480M590 400L600 440 660 480 700 420M520 450L580 490 650 500 740 510M10 220L60 190 70 280 30 310 0 250M250 580L300 550 320 510 360 530 380 590 370 620 250 590M400 380L390 480 430 520M690 540L640 560 620 620 680 640 760 580M850 180L830 220 800 210 740 200M700 270L640 290 630 340M755 480L830 470 900 480M900 120L930 150 900 180M820 60L880 80 910 60 960 80M780 30L860 40M870 130L900 100M920 520L900 560 830 600M230 480V580M400 620L440 640 500 600 550 620 570 700 500 730M100 540L170 600M250 680L330 690 330 740 240 740M340 700V760M430 640L380 700" />
      </Sheet>
    </g>

    <g filter="url(#sealine)">
      <Sheet on="arabia">
        <Line $kind="nation" d="M815 535L757 723 477 825 360 847 205 862 118 907 65 975 48 1010 22 1027-10 1027M477 825L585 1072" />
        <Line $kind="state" d="M-10 793H477V825M757 723L890 933" />
        <Line d="M1205 540L1180 595 1140 630 1150 670 1140 705 1100 730 1070 712H1042L1038 790 1045 830 1020 850 960 853 930 870 920 920 905 937 907 980 890 993 805 997 780 1030 740 1048 690 1040 640 1060 585 1072 520 1103 515 1160 490 1178 440 1205 350 1230 300 1252 250 1260 220 1280 170 1328 140 1338 100 1332 50 1368-10 1383" />
      </Sheet>
      <Sheet on="somalia">
        <Line $kind="nation" d="M-10 538H98L60 580-10 640" />
        <Line $kind="state" d="M187 210L195 270 202 430 98 538M60 580L150 593 180 575 205 568 245 585 270 605" />
        <Line d="M-10 240L15 218 30 213 70 222 110 220 150 204 190 210 230 198 270 188 310 178 330 152 360 140 410 152 427 165 425 190 413 215 415 280 435 290 440 310 425 332 392 330 390 370 375 420 345 465 325 510 295 545 285 580 240 650 220 700 200 750 120 870" />
        <Line d="M470 110Q488 80 508 115 535 120 532 142 520 170 480 158 455 145 470 110zM568 110Q560 80 590 76L620 68 650 74 680 70 720 85Q740 100 730 118L690 140 620 146Q610 170 575 164 540 155 550 130 565 118 590 125z" />
      </Sheet>
      <Sheet on="india">
        <Line d="M35-5L110 75 160 115 330 200 345 290 385 480 402 555 440 625 500 770 530 860 590 975 620 1010 645 1080 665 1150 720 1235 780 1270 825 1258 850 1200 880 1175 920 1170 967 1182" />
        <Line d="M950 1175L945 1120 975 1080 1020 1080 1060 1100 1095 1160 1130 1210 1160 1260 1175 1310 1168 1370 1130 1420 1070 1448 1040 1458 1000 1445 975 1400 962 1340 965 1240 970 1190M918 1125L945 1075 997 1070 998 935 1025 850 1040 780 1045 700 1070 600 1115 552 1210 505 1290 405 1320 385 1405 295 1568 191 1629 117 1798 42 1941 39 2027 56 2053 121 2072 140M1798 42V0" />
        <Line d="M250 905L265 855 285 848 310 862 458 1000V1070L415 1220Q405 1255 380 1252 355 1250 350 1225L295 1070zM335 1560L323 1415 345 1335 365 1320 410 1335 425 1390 455 1490 460 1560" />
        <Line $kind="state" d="M340 1365L418 1362M325 1430L355 1422 365 1395 425 1380M365 1395L385 1440 440 1425M385 1440L400 1495M337 1515L440 1462M400 1500V1560M400 1515H458M1867 10V40M1945 10V40" />
      </Sheet>
      <Sheet on="indochina">
        <Line d="M105 50L130 100 120 130 125 165 175 215 205 290 250 340 283 410 270 480V580L592 697 590 860 563 915 575 980 605 1115 585 1180V1220L605 1235 622 1225 625 1200 637 1200 640 1310 655 1325 675 1315 685 1300 720 1335 750 1350 725 1375V1405L760 1410 735 1415 700 1460 710 1500M637 1200V1160" />
        <Line d="M180 735L150 750 130 790V850L88 935V1000L110 1080 140 1180 220 1350 240 1380 262 1385 283 1355 270 1310 240 1285 255 1250V1210L235 1190 212 1200 205 1225 180 1180 175 1145 148 1050 150 1010 170 980 175 940 195 935 207 880 200 830 207 745z" />
        <Line d="M345 1440L370 1410 440 1450 500 1470 590 1485 640 1525M345 1440L378 1570M835 870L900 868 950 872 1000 880 1010 920 1040 960 1065 950 1078 920 1062 890M835 870L800 950 785 1030 830 1085 845 1130 895 1210 935 1245 1015 1310 1020 1400 990 1440M1050 960L1060 1095 1120 1165 1255 1243 1425 1222 1520 1170M1095 1133L1170 1075 1225 1045M1520 115L1430 135 1370 170 1365 230 1350 270 1430 340V380L1460 420 1520 445M1020 1400L1100 1440 1130 1480M1520 140Q1490 160 1520 180" />
        <Line d="M210 645a23 24 0 1 0 46 0a23 24 0 1 0-46 0M180 714a25 27 0 1 0 50 0a25 27 0 1 0-50 0M273 773a20 20 0 1 0 40 0a20 20 0 1 0-40 0M237 879a20 20 0 1 0 40 0a20 20 0 1 0-40 0" />
        <Line $kind="state" d="M535 430L590 560 600 640 595 697M935 1245L915 1380M1060 1020L1150 1005M1130 1168L1250 1115M1310 1230L1325 1150 1360 1225 1350 1150M1390 1190L1440 1130M750 1110L795 1100 800 1065 830 1070M855 870V770M900 868L890 800M950 872L940 830" />
      </Sheet>
    </g>

    <g opacity="0.8">
      {TOWNS.map(([s, x, y], i) => {
        const [cx, cy] = place(s, x, y);
        return <circle key={i} cx={cx} cy={cy} r="2.4" fill="#fff" stroke="#555" />;
      })}
    </g>
    {CAPITALS.map(([s, x, y], i) => {
      const [cx, cy] = place(s, x, y);
      return (
        <g key={i}>
          <circle cx={cx} cy={cy} r="3.600" fill="#fff" stroke="#444" strokeWidth="1.200" />
          <circle cx={cx} cy={cy} r="1.500" fill="#444" />
        </g>
      );
    })}
    {LABELS.map(([s, t, x, y, w, size, kind]) => {
      const [px, py] = place(s, x, y);
      const len = w / SHEETS[s].sx;
      const rtl = /[\u0600-\u06ff]/.test(t);
      return (
        <MapText key={t + x} x={rtl ? px + len : px} y={py} direction={rtl ? "rtl" : "ltr"} textLength={len} lengthAdjust="spacingAndGlyphs" $size={size} $kind={kind}>
          {t}
        </MapText>
      );
    })}

    <g>
      <path d="M969.700 704.500C969 693 958 686 958 674a11.700 11.700 0 0 1 23.400 0C981.400 686 970.500 693 969.700 704.500z" fill="#fa6a5e" stroke="#3a1512" strokeWidth="1.800" />
      <circle cx="969.700" cy="673.800" r="3.300" fill="#000" />
    </g>
  </svg>
);

/* ---------- app ---------- */

const FOLDERS_A = [["Gmail", 92], ["Movies", 100], ["Social Media", 137], ["INTERVIEW", 126]];
const FOLDERS_B = [["job", 73], ["downloa", 110], ["coding", 99], ["Government", 135], ["resume", 101], ["myself", 96]];

export default function App() {
  return (
    <Screen>
      <Global />
      <TabStrip>
        <TabSearch>
          <svg width="12" height="8" viewBox="0 0 12 8" fill="none" stroke="#e4e4ee" strokeWidth="2"><path d="M1.500 1.500L6 6l4.500-4.500" /></svg>
        </TabSearch>
        <Tab>
          <Favicon><FaReact size={18} /></Favicon>
          <TabTitle>React App</TabTitle>
          <Cross size={11} color="#e4e4ee" w={1.800} />
        </Tab>
        <NewTab>
          <svg width="14" height="14" viewBox="0 0 14 14" stroke="#c5c6dc" strokeWidth="1.800"><path d="M7 0v14M0 7h14" /></svg>
        </NewTab>
        <WindowButtons>
          <WindowButton><svg width="13" height="2"><rect width="13" height="1" fill="#fff" /></svg></WindowButton>
          <WindowButton $w={55}>
            <svg width="14" height="14" viewBox="0 0 14 14" fill="none" stroke="#fff" strokeWidth="1.200">
              <rect x="0.700" y="2.700" width="10.300" height="10.300" rx="1.800" />
              <path d="M3.200 0.700h7.800q2.300 0 2.300 2.300v7.500" />
            </svg>
          </WindowButton>
          <WindowButton $w={59}><Cross size={15} color="#fff" w={0.900} /></WindowButton>
        </WindowButtons>
      </TabStrip>
      <ToolbarBack>
        <Toolbar>
          <ToolButton $dim><MdArrowBack size={20} /></ToolButton>
          <ToolButton $dim><MdArrowForward size={20} /></ToolButton>
          <ToolButton><MdRefresh size={22} /></ToolButton>
          <ToolButton><MdOutlineHome size={22} /></ToolButton>
          <Omnibox>
            <SiteInfo><MdOutlineInfo size={20} /></SiteInfo>
            <Url><b>localhost:</b>3000</Url>
            <ToolButton $w={40}><Install /></ToolButton>
            <ToolButton $w={41}><MdZoomIn size={23} /></ToolButton>
            <ToolButton $w={40}><MdStarBorder size={24} /></ToolButton>
          </Omnibox>
          <ToolButton $w={68}><Puzzle /></ToolButton>
          <Divider $w={1.5} $m="0 9.5px 0 -2px" />
          <ToolButton $w={48}><Download /></ToolButton>
          <Avatar><Portrait size={25} /></Avatar>
          <ToolButton $w={44}><MdMoreVert size={24} /></ToolButton>
        </Toolbar>
      </ToolbarBack>
      <Bookmarks>
        <Bookmark $w={81} $gap={8}><AppsGrid />Apps</Bookmark>
        {FOLDERS_A.map(([n, w]) => <Bookmark key={n} $w={w}><Folder />{n}</Bookmark>)}
        <Bookmark $w={107} $gap={7}><GptBadge><AiOutlineOpenAI size={17} /></GptBadge>ChatGPT</Bookmark>
        {FOLDERS_B.map(([n, w]) => <Bookmark key={n} $w={w}><Folder />{n}</Bookmark>)}
        <Bookmark $w={140} $gap={6}><MdPublic size={20} />Active Courses</Bookmark>
        <Spacer />
        <Divider $w={2} $m="0 20px 0 0" />
        <Bookmark $w={143}><Folder />All Bookmarks</Bookmark>
      </Bookmarks>

      <Viewport>
        <Page>
          <Heading $h={131} $top={30} $ls={-0.38}>Drone Pilots Map</Heading>
          <SearchInput defaultValue="dind" />
          <MapBox>
            <WorldMap />
            <ZoomControl>
              <ZoomButton $h={42} $line><svg width="17" height="17" viewBox="0 0 17 17" stroke="#000" strokeWidth="2"><path d="M8.500 0v17M0 8.500h17" /></svg></ZoomButton>
              <ZoomButton $h={41}><svg width="17" height="3"><rect width="17" height="2" fill="#000" /></svg></ZoomButton>
            </ZoomControl>
            <Popup>
              <PopupClose><Cross size={13} color="#757575" w={1.300} /></PopupClose>
              <p><b>Admin Location</b></p>
              <p>Latitude: 12.971599</p>
              <p>Longitude: 77.594566</p>
            </Popup>
            <PopupTip />
            <Attribution>
              <svg width="17" height="11"><rect width="17" height="6" fill="#4c7be1" /><rect y="5.500" width="17" height="5.500" fill="#ffd500" /></svg>
              <a>Leaflet</a> | © <a>OpenStreetMap</a> contributors
            </Attribution>
          </MapBox>
          <Heading $h={114} $top={31} $ls={-0.65}>Drone Pilot Locations</Heading>
        </Page>
        <VScroll>
          <ScrollArrow $off $turn={0} />
          <Thumb $w={17} $h={488} />
          <Spacer />
          <ScrollArrow $turn={180} />
        </VScroll>
        <HScroll>
          <ScrollArrow $off $turn={-90} />
          <Thumb $w={1837} $h={17} />
          <Spacer />
          <ScrollArrow $turn={90} />
        </HScroll>
        <Corner />
      </Viewport>

      <Taskbar>
        <TaskApps>
          <TaskApp $gap={7}><WindowsLogo /></TaskApp>
          <TaskApp $running><Explorer /></TaskApp>
          <TaskApp><FaWhatsapp size={33} color="#25d366" /><CountBadge>22</CountBadge></TaskApp>
          <TaskApp><Wps /></TaskApp>
          <TaskApp><FaSpotify size={28} color="#1ed760" /></TaskApp>
          <TaskApp $active><Chrome /><ProfileBadge><Portrait size={20} /></ProfileBadge></TaskApp>
          <TaskApp $running><VsCode /></TaskApp>
        </TaskApps>
        <TrayText $w={96} $ls={-0.3}><span>↑: 0.00 KB/s</span><span>↓: 0.00 KB/s</span></TrayText>
        <TrayIcon $w={40}>
          <svg width="14" height="9" viewBox="0 0 14 9" fill="none" stroke="#fff" strokeWidth="1.800"><path d="M1 8l6-6 6 6" /></svg>
        </TrayIcon>
        <TrayIcon $w={40}><BluetoothTile><MdBluetooth size={16} color="#fff" /></BluetoothTile></TrayIcon>
        <TrayText $w={56} $align="center"><span>ENG</span><span>IN</span></TrayText>
        <TrayIcon $w={38}><Wifi /></TrayIcon>
        <TrayIcon $w={22}><Speaker /></TrayIcon>
        <TrayIcon $w={38}><Battery /></TrayIcon>
        <TrayText $w={89} $align="right" $ls={0.15}><span>07:57:34</span><span>13-07-2024</span></TrayText>
        <TrayIcon $w={38}><Bell /></TrayIcon>
        <TrayIcon $w={54}><Copilot /></TrayIcon>
      </Taskbar>
    </Screen>
  );
}
